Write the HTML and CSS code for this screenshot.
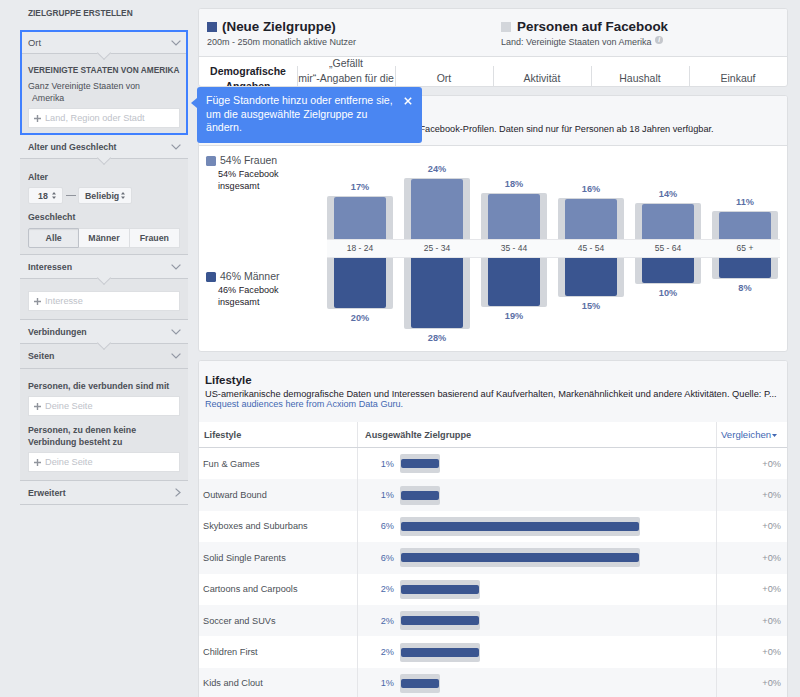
FILE: index.html
```html
<!DOCTYPE html>
<html lang="de">
<head>
<meta charset="utf-8">
<title>Zielgruppe erstellen</title>
<link rel="stylesheet" href="styles.css">
</head>
<body>
<div class="page">
  <aside class="sidebar">
    <div class="side-title">ZIELGRUPPE ERSTELLEN</div>

    <section class="sec sec-active">
      <div class="sec-head has-notch">
        <span>Ort</span>
        <svg class="chev" width="10" height="6" viewBox="0 0 10 6"><path d="M0.6 0.6 L5 5 L9.4 0.6" fill="none" stroke="#9197a3" stroke-width="1.2"/></svg>
      </div>
      <div class="sec-body">
        <div class="loc-title">VEREINIGTE STAATEN VON AMERIKA</div>
        <div class="loc-line">Ganz Vereinigte Staaten von</div>
        <div class="loc-line loc-indent">Amerika</div>
        <div class="field field-loc">
          <svg class="plus" width="7" height="7" viewBox="0 0 7 7"><path d="M3.5 0 V7 M0 3.5 H7" stroke="#90949c" stroke-width="1.4"/></svg>
          <span>Land, Region oder Stadt</span>
        </div>
      </div>
    </section>

    <section class="sec">
      <div class="sec-head has-notch">
        <span>Alter und Geschlecht</span>
        <svg class="chev" width="10" height="6" viewBox="0 0 10 6"><path d="M0.6 0.6 L5 5 L9.4 0.6" fill="none" stroke="#9197a3" stroke-width="1.2"/></svg>
      </div>
      <div class="sec-body age-body">
        <div class="lbl">Alter</div>
        <div class="age-row">
          <div class="select sel-min">18<svg width="4" height="7" viewBox="0 0 4 7"><path d="M2 0 L4 2.6 H0Z M2 7 L0 4.4 H4Z" fill="#6b7079"/></svg></div>
          <span class="dash"></span>
          <div class="select sel-max">Beliebig<svg width="4" height="7" viewBox="0 0 4 7"><path d="M2 0 L4 2.6 H0Z M2 7 L0 4.4 H4Z" fill="#6b7079"/></svg></div>
        </div>
        <div class="lbl lbl-gap">Geschlecht</div>
        <div class="seg">
          <div class="seg-btn seg-on">Alle</div>
          <div class="seg-btn">Männer</div>
          <div class="seg-btn">Frauen</div>
        </div>
      </div>
    </section>

    <section class="sec">
      <div class="sec-head has-notch">
        <span>Interessen</span>
        <svg class="chev" width="10" height="6" viewBox="0 0 10 6"><path d="M0.6 0.6 L5 5 L9.4 0.6" fill="none" stroke="#9197a3" stroke-width="1.2"/></svg>
      </div>
      <div class="sec-body">
        <div class="field">
          <svg class="plus" width="7" height="7" viewBox="0 0 7 7"><path d="M3.5 0 V7 M0 3.5 H7" stroke="#90949c" stroke-width="1.4"/></svg>
          <span>Interesse</span>
        </div>
      </div>
    </section>

    <section class="sec">
      <div class="sec-head has-notch">
        <span>Verbindungen</span>
        <svg class="chev" width="10" height="6" viewBox="0 0 10 6"><path d="M0.6 0.6 L5 5 L9.4 0.6" fill="none" stroke="#9197a3" stroke-width="1.2"/></svg>
      </div>
      <div class="sec-body con-body">
        <div class="sub-head">
          <span>Seiten</span>
          <svg class="chev" width="10" height="6" viewBox="0 0 10 6"><path d="M0.6 0.6 L5 5 L9.4 0.6" fill="none" stroke="#9197a3" stroke-width="1.2"/></svg>
        </div>
        <div class="con-inner">
          <div class="lbl">Personen, die verbunden sind mit</div>
          <div class="field field-con">
            <svg class="plus" width="7" height="7" viewBox="0 0 7 7"><path d="M3.5 0 V7 M0 3.5 H7" stroke="#90949c" stroke-width="1.4"/></svg>
            <span>Deine Seite</span>
          </div>
          <div class="lbl lbl-two">Personen, zu denen keine<br>Verbindung besteht zu</div>
          <div class="field field-con">
            <svg class="plus" width="7" height="7" viewBox="0 0 7 7"><path d="M3.5 0 V7 M0 3.5 H7" stroke="#90949c" stroke-width="1.4"/></svg>
            <span>Deine Seite</span>
          </div>
        </div>
      </div>
    </section>

    <section class="sec">
      <div class="sec-head">
        <span>Erweitert</span>
        <svg class="chev-r" width="6" height="9" viewBox="0 0 6 9"><path d="M0.6 0.6 L5 4.5 L0.6 8.4" fill="none" stroke="#9197a3" stroke-width="1.2"/></svg>
      </div>
    </section>
  </aside>

  <main class="main">
    <div class="card aud-card">
      <div class="aud-head">
        <div class="aud">
          <div class="aud-title"><span class="sq sq-blue"></span>(Neue Zielgruppe)</div>
          <div class="aud-sub">200m - 250m monatlich aktive Nutzer</div>
        </div>
        <div class="aud">
          <div class="aud-title"><span class="sq sq-gray"></span>Personen auf Facebook</div>
          <div class="aud-sub">Land: Vereinigte Staaten von Amerika <span class="info">i</span></div>
        </div>
      </div>
      <div class="tabs">
        <div class="tab tab-on">Demografische Angaben</div>
        <div class="tab tab-nw">„Gefällt<br>mir“-Angaben für die<br>Seiten</div>
        <div class="tab">Ort</div>
        <div class="tab">Aktivität</div>
        <div class="tab">Haushalt</div>
        <div class="tab">Einkauf</div>
      </div>
    </div>

    <div class="card demo-card">
      <div class="demo-head">
        <div class="card-title">Alter und Geschlecht</div>
        <div class="demo-desc">Ausgewählte Zielgruppe im Vergleich zu sämtlichen Facebook-Profilen. Daten sind nur für Personen ab 18 Jahren verfügbar.</div>
      </div>
      <div class="chart">
        <div class="legend">
          <div class="leg leg-f">
            <div class="leg-main"><span class="sq sq-f"></span>54% Frauen</div>
            <div class="leg-sub">54% Facebook<br>insgesamt</div>
          </div>
          <div class="leg leg-m">
            <div class="leg-main"><span class="sq sq-m"></span>46% Männer</div>
            <div class="leg-sub">46% Facebook<br>insgesamt</div>
          </div>
        </div>
        <div class="bars">
          <div class="bars-top">
            <div class="col"><span class="pct">17%</span><div class="bg"><div class="bar bar-f" style="height:42.5px"></div></div></div>
            <div class="col"><span class="pct">24%</span><div class="bg"><div class="bar bar-f" style="height:60px"></div></div></div>
            <div class="col"><span class="pct">18%</span><div class="bg"><div class="bar bar-f" style="height:45px"></div></div></div>
            <div class="col"><span class="pct">16%</span><div class="bg"><div class="bar bar-f" style="height:40px"></div></div></div>
            <div class="col"><span class="pct">14%</span><div class="bg"><div class="bar bar-f" style="height:35px"></div></div></div>
            <div class="col"><span class="pct">11%</span><div class="bg"><div class="bar bar-f" style="height:27.5px"></div></div></div>
          </div>
          <div class="band">
            <span>18 - 24</span><span>25 - 34</span><span>35 - 44</span><span>45 - 54</span><span>55 - 64</span><span>65 +</span>
          </div>
          <div class="bars-bot">
            <div class="col"><div class="bg"><div class="bar bar-m" style="height:50px"></div></div><span class="pct">20%</span></div>
            <div class="col"><div class="bg"><div class="bar bar-m" style="height:70px"></div></div><span class="pct">28%</span></div>
            <div class="col"><div class="bg"><div class="bar bar-m" style="height:47.5px"></div></div><span class="pct">19%</span></div>
            <div class="col"><div class="bg"><div class="bar bar-m" style="height:37.5px"></div></div><span class="pct">15%</span></div>
            <div class="col"><div class="bg"><div class="bar bar-m" style="height:25px"></div></div><span class="pct">10%</span></div>
            <div class="col"><div class="bg"><div class="bar bar-m" style="height:20px"></div></div><span class="pct">8%</span></div>
          </div>
        </div>
      </div>
    </div>

    <div class="card life-card">
      <div class="life-head">
        <div class="card-title">Lifestyle</div>
        <div class="life-desc">US-amerikanische demografische Daten und Interessen basierend auf Kaufverhalten, Markenähnlichkeit und andere Aktivitäten. Quelle: P...</div>
        <div class="life-link">Request audiences here from Acxiom Data Guru.</div>
      </div>
      <div class="trow thead">
        <div class="c1">Lifestyle</div>
        <div class="c2">Ausgewählte Zielgruppe</div>
        <div class="c3 cmp">Vergleichen<svg width="5" height="3" viewBox="0 0 5 3"><path d="M0 0 H5 L2.5 3Z" fill="#4267b2"/></svg></div>
      </div>
      <div class="trow"><div class="c1">Fun &amp; Games</div><div class="c2"><span class="tp">1%</span><span class="lb" style="width:40px"><i></i></span></div><div class="c3">+0%</div></div>
      <div class="trow"><div class="c1">Outward Bound</div><div class="c2"><span class="tp">1%</span><span class="lb" style="width:40px"><i></i></span></div><div class="c3">+0%</div></div>
      <div class="trow"><div class="c1">Skyboxes and Suburbans</div><div class="c2"><span class="tp">6%</span><span class="lb" style="width:240px"><i></i></span></div><div class="c3">+0%</div></div>
      <div class="trow"><div class="c1">Solid Single Parents</div><div class="c2"><span class="tp">6%</span><span class="lb" style="width:240px"><i></i></span></div><div class="c3">+0%</div></div>
      <div class="trow"><div class="c1">Cartoons and Carpools</div><div class="c2"><span class="tp">2%</span><span class="lb" style="width:80px"><i></i></span></div><div class="c3">+0%</div></div>
      <div class="trow"><div class="c1">Soccer and SUVs</div><div class="c2"><span class="tp">2%</span><span class="lb" style="width:80px"><i></i></span></div><div class="c3">+0%</div></div>
      <div class="trow"><div class="c1">Children First</div><div class="c2"><span class="tp">2%</span><span class="lb" style="width:80px"><i></i></span></div><div class="c3">+0%</div></div>
      <div class="trow"><div class="c1">Kids and Clout</div><div class="c2"><span class="tp">1%</span><span class="lb" style="width:40px"><i></i></span></div><div class="c3">+0%</div></div>
    </div>

    <div class="tip">
      Füge Standorte hinzu oder entferne sie, um die ausgewählte Zielgruppe zu ändern.
      <svg class="tip-x" width="8" height="8" viewBox="0 0 8 8"><path d="M0.8 0.8 L7.2 7.2 M7.2 0.8 L0.8 7.2" stroke="#fff" stroke-width="1.5"/></svg>
    </div>
  </main>
</div>
</body>
</html>
```

FILE: styles.css
```css
* { box-sizing: border-box; }
html, body { margin: 0; }
body {
  background: #e9ebee;
  font-family: "Liberation Sans", Arial, Helvetica, sans-serif;
  color: #4b4f56;
}
.page {
  display: flex;
  align-items: flex-start;
  gap: 10px;
  padding: 8px 0 0 20px;
  width: 800px;
  height: 697px;
  overflow: hidden;
}

/* ---------- sidebar ---------- */
.sidebar { width: 168px; flex: none; }
.side-title {
  height: 22px;
  padding-left: 8px;
  font-size: 8.3px;
  line-height: 10px;
  font-weight: bold;
}
.sec-head {
  position: relative;
  height: 24px;
  display: flex;
  align-items: center;
  justify-content: space-between;
  padding: 0 7px 0 8px;
  background: #e9ebee;
  border-bottom: 1px solid #c9ccd1;
  font-size: 8.8px;
  font-weight: bold;
}
.has-notch::after {
  content: "";
  position: absolute;
  left: 50%;
  bottom: -5px;
  width: 9px;
  height: 9px;
  margin-left: -5px;
  background: inherit;
  border-right: 1px solid #c9ccd1;
  border-bottom: 1px solid #c9ccd1;
  transform: rotate(45deg);
}
.sec-active { border: 2px solid #4080ff; }
.sec-active .sec-head {
  height: 22px;
  padding: 0 5px 0 6px;
  font-weight: normal;
  font-size: 9.4px;
}
.sec-body {
  background: #e3e5e8;
  border-bottom: 1px solid #c9ccd1;
  padding: 12px 8px 8px;
}
.sec-active .sec-body { border-bottom: 0; padding: 11px 6px 5px; }
.age-body { padding-top: 13px; padding-bottom: 6px; }
.loc-title { font-size: 8.3px; line-height: 10px; font-weight: bold; margin-bottom: 5px; }
.loc-line { font-size: 8.8px; line-height: 12px; }
.loc-indent { padding-left: 4px; }
.field {
  display: flex;
  align-items: center;
  gap: 4px;
  height: 20px;
  background: #fff;
  border: 1px solid #dddfe2;
  padding-left: 5px;
  font-size: 9.2px;
  color: #bec2c9;
}
.field-loc { margin-top: 4px; }
.plus { flex: none; }
.lbl { font-size: 8.8px; line-height: 11px; font-weight: bold; margin-bottom: 4px; }
.lbl-gap { margin-top: 8px; margin-bottom: 5px; }
.age-row { display: flex; align-items: center; height: 17px; }
.select {
  display: flex;
  align-items: center;
  justify-content: space-between;
  height: 17px;
  background: #f6f7f9;
  border: 1px solid #dddfe2;
  border-radius: 2px;
  font-size: 8.8px;
  font-weight: bold;
  padding: 0 6px 0 9px;
}
.sel-min { width: 35px; }
.sel-max { width: 54px; padding-left: 6px; }
.dash { width: 10px; height: 1px; background: #90949c; margin: 0 2px 0 3px; }
.seg { display: flex; height: 20px; }
.seg-btn {
  flex: 1;
  display: flex;
  align-items: center;
  justify-content: center;
  background: #f6f7f9;
  border: 1px solid #dddfe2;
  font-size: 8.8px;
  font-weight: bold;
}
.seg-btn + .seg-btn { border-left: 0; }
.seg-on {
  background: #e9ebee;
  border-color: #bec2c9;
  box-shadow: inset 0 1px 1px rgba(0, 0, 0, 0.08);
  border-radius: 2px 0 0 2px;
}
.con-body { padding: 0; }
.sub-head {
  height: 25px;
  display: flex;
  align-items: center;
  justify-content: space-between;
  padding: 0 7px 0 8px;
  border-bottom: 1px solid #c9ccd1;
  font-size: 8.8px;
  font-weight: bold;
}
.con-inner { padding: 12px 8px 8px; }
.lbl-two { margin-top: 8px; margin-bottom: 4px; line-height: 12px; }

/* ---------- main ---------- */
.main {
  position: relative;
  width: 590px;
  flex: none;
  display: flex;
  flex-direction: column;
  gap: 8px;
}
.card {
  background: #fff;
  border: 1px solid #dddfe2;
  border-radius: 3px;
  overflow: hidden;
}
.aud-head {
  display: flex;
  height: 48px;
  background: #f6f7f9;
  border-bottom: 1px solid #dddfe2;
}
.aud { flex: 1; padding: 9px 8px 0; }
.aud-title {
  display: flex;
  align-items: center;
  font-size: 13.4px;
  line-height: 18px;
  font-weight: bold;
  color: #1d2129;
}
.sq { display: inline-block; width: 10px; height: 10px; margin-right: 5px; flex: none; }
.sq-blue { background: #3b5491; }
.sq-gray { background: #d3d6db; margin-right: 6px; }
.aud-sub { font-size: 9px; line-height: 12px; }
.info {
  display: inline-block;
  width: 8px;
  height: 8px;
  border-radius: 50%;
  background: #c4c7cc;
  color: #fff;
  font-size: 6.5px;
  line-height: 8px;
  text-align: center;
  font-style: italic;
  font-weight: bold;
  vertical-align: 3px;
  margin-left: 1px;
}
.tabs { display: flex; height: 29px; overflow: hidden; }
.tab {
  position: relative;
  flex: 1;
  height: 43px;
  display: flex;
  align-items: center;
  justify-content: center;
  text-align: center;
  padding: 0 1px;
  font-size: 10.5px;
  line-height: 15px;
}
.tab + .tab::before {
  content: "";
  position: absolute;
  left: 0;
  top: 9px;
  height: 30px;
  width: 1px;
  background: #dddfe2;
}
.tab-on { font-weight: bold; color: #1d2129; }
.tab-nw { white-space: nowrap; }

.demo-card { height: 257px; }
.demo-head {
  height: 50px;
  background: #f6f7f9;
  border-bottom: 1px solid #dddfe2;
  padding: 9px 8px 0;
}
.card-title { font-size: 11.5px; line-height: 14px; font-weight: bold; color: #1d2129; }
.demo-desc { font-size: 9.2px; line-height: 12px; margin-top: 4px; color: #1d2129; white-space: nowrap; }
.chart { display: flex; height: 205px; padding-left: 7px; }
.legend { width: 121px; flex: none; padding-top: 9px; }
.leg-main {
  display: flex;
  align-items: center;
  font-size: 10.5px;
  line-height: 11px;
}
.leg-main .sq { margin-right: 4px; border-radius: 1.5px; }
.sq-f { background: #7388b6; }
.sq-m { background: #3a5590; }
.leg-sub { font-size: 9.1px; line-height: 12px; margin: 2px 0 0 12px; color: #1d2129; }
.leg-f { height: 116px; }
.bars { width: 453px; flex: none; }
.bars-top, .bars-bot, .band {
  display: grid;
  grid-template-columns: repeat(6, 66px);
  column-gap: 11px;
}
.bars-top { height: 93px; align-items: end; }
.bars-bot { align-items: start; }
.col { display: flex; flex-direction: column; align-items: center; }
.pct { font-size: 9.2px; line-height: 12px; font-weight: bold; color: #5a6fa5; }
.bars-top .pct { margin-bottom: 3px; }
.bars-bot .pct { margin-top: 3px; }
.bg { width: 66px; background: #d3d6db; padding: 1px 7px 0; border-radius: 2px 2px 0 0; }
.bars-bot .bg { padding: 0 7px 1px; border-radius: 0 0 2px 2px; }
.bar { width: 52px; }
.bar-f { background: #7388b6; border-radius: 2px 2px 0 0; }
.bar-m { background: #3a5590; border-radius: 0 0 2px 2px; }
.band {
  height: 19px;
  width: 453px;
  background: #f9fafb;
  border-top: 1px solid #e5e6e9;
  border-bottom: 1px solid #e5e6e9;
  font-size: 8.5px;
  line-height: 17px;
  text-align: center;
}

.life-card { flex: none; }
.life-head {
  height: 61px;
  background: #f6f7f9;
  padding: 12px 7px 0 6px;
}
.life-desc {
  font-size: 9.25px;
  line-height: 9.5px;
  margin-top: 3px;
  color: #1d2129;
  white-space: nowrap;
  overflow: hidden;
}
.life-link { font-size: 9.1px; line-height: 9.5px; color: #4267b2; }
.trow {
  display: grid;
  grid-template-columns: 159px 358px 1fr;
  height: 31.4px;
  align-items: stretch;
  font-size: 9.2px;
  background: #fff;
}
.trow:nth-child(even) { background: #f6f7f9; }
.trow > div { display: flex; align-items: center; }
.c1 { padding-left: 4px; border-right: 1px solid #e5e6e9; }
.c3 { justify-content: flex-end; padding-right: 6px; border-left: 1px solid #e5e6e9; color: #90949c; }
.trow.thead {
  height: 26px;
  background: #fff;
  border-bottom: 1px solid #d3d6db;
  font-weight: bold;
  color: #4b4f56;
}
.thead .c1 { padding-left: 5px; }
.thead .c2 { padding-left: 7px; }
.thead .c3 { justify-content: flex-start; padding: 0 0 0 4px; font-weight: normal; color: #4267b2; font-size: 9.6px; white-space: nowrap; }
.thead .c3 svg { margin-left: 1px; margin-top: 1px; }
.tp { width: 36px; text-align: right; color: #4a67a8; margin-right: 6px; }
.lb {
  display: flex;
  align-items: center;
  height: 19px;
  background: #d3d6db;
  border-radius: 2px;
  padding: 0 1px;
}
.lb i { display: block; width: 100%; height: 9px; background: #3a5590; border-radius: 2px; }

/* ---------- tooltip ---------- */
.tip {
  position: absolute;
  left: -1px;
  top: 79px;
  width: 225px;
  height: 56px;
  background: #4a86f2;
  border-radius: 3px;
  padding: 7px 22px 0 9px;
  color: #fff;
  font-size: 10.6px;
  line-height: 13.5px;
}
.tip::before {
  content: "";
  position: absolute;
  left: -6px;
  top: 11px;
  border-right: 6px solid #4a86f2;
  border-top: 5px solid transparent;
  border-bottom: 5px solid transparent;
}
.tip-x { position: absolute; right: 10px; top: 10px; }
```
